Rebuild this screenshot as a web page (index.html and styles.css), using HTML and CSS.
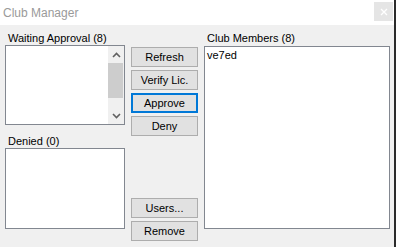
FILE: index.html
```html
<!DOCTYPE html>
<html>
<head>
<meta charset="utf-8">
<link rel="stylesheet" href="styles.css">
</head>
<body>
<div class="window">
  <div class="titlebar">
    <span class="title">Club Manager</span>
    <span class="close"><svg width="8" height="8" viewBox="0 0 8 8"><path d="M1 1L7 7M7 1L1 7" stroke="#ffffff" stroke-width="1.3"/></svg></span>
  </div>
  <div class="client">
    <div class="col left">
      <div class="label">Waiting Approval (8)</div>
      <div class="listbox waiting">
        <div class="items"></div>
        <div class="scrollbar">
          <div class="arrow"><svg width="9" height="6" viewBox="0 0 9 6"><path d="M1 5L4.5 1.5L8 5" fill="none" stroke="#606060" stroke-width="1.6"/></svg></div>
          <div class="track"><div class="thumb"></div></div>
          <div class="arrow"><svg width="9" height="6" viewBox="0 0 9 6"><path d="M1 1L4.5 4.5L8 1" fill="none" stroke="#606060" stroke-width="1.6"/></svg></div>
        </div>
      </div>
      <div class="label denied-label">Denied (0)</div>
      <div class="listbox denied"></div>
    </div>
    <div class="col middle">
      <div class="btn-group">
        <button class="btn">Refresh</button>
        <button class="btn">Verify Lic.</button>
        <button class="btn focused">Approve</button>
        <button class="btn">Deny</button>
      </div>
      <div class="btn-group bottom">
        <button class="btn">Users...</button>
        <button class="btn">Remove</button>
      </div>
    </div>
    <div class="col right">
      <div class="label">Club Members (8)</div>
      <div class="listbox members">
        <div class="item">ve7ed</div>
      </div>
    </div>
  </div>
</div>
</body>
</html>
```
FILE: styles.css
```css
html, body {
  margin: 0;
  padding: 0;
  background: #f0f0f0;
}
body {
  font-family: "Liberation Sans", Arial, sans-serif;
  font-size: 12px;
  color: #000;
}
.window {
  width: 396px;
  height: 247px;
  box-sizing: border-box;
  border-right: 2px solid #2b2b2b;
  background: #f0f0f0;
  display: flex;
  flex-direction: column;
}
.titlebar {
  height: 25px;
  background: #ffffff;
  display: flex;
  align-items: center;
  justify-content: space-between;
  padding-left: 3px;
  padding-right: 1px;
}
.title {
  color: #9a9a9a;
  font-size: 12px;
  margin-top: 1px;
}
.close {
  width: 19px;
  height: 19px;
  background: #e5e5e5;
  display: flex;
  align-items: center;
  justify-content: center;
  margin-bottom: 2px;
}
.client {
  flex: 1;
  display: grid;
  grid-template-columns: 120px 67px 186px;
  column-gap: 6px;
  padding: 7px 0 0 5px;
  align-items: start;
}
.col {
  display: flex;
  flex-direction: column;
}
.label {
  font-size: 11px;
  height: 13px;
  line-height: 13px;
  padding-left: 3px;
  white-space: nowrap;
}
.listbox {
  background: #ffffff;
  border: 1px solid #828790;
  box-sizing: border-box;
}
.waiting {
  height: 80px;
  display: flex;
}
.waiting .items {
  flex: 1;
}
.scrollbar {
  width: 16px;
  background: #f0f0f0;
  display: flex;
  flex-direction: column;
}
.arrow {
  height: 17px;
  display: flex;
  align-items: center;
  justify-content: center;
}
.track {
  flex: 1;
}
.thumb {
  height: 35px;
  margin: 0 1px 0 0;
  background: #cdcdcd;
}
.denied-label {
  margin-top: 10px;
  height: 13px;
}
.denied {
  height: 81px;
}
.middle {
  justify-content: space-between;
  padding-top: 15px;
  height: 209px;
  box-sizing: border-box;
}
.btn-group {
  display: flex;
  flex-direction: column;
  gap: 3px;
}
.btn {
  height: 20px;
  width: 67px;
  margin: 0;
  padding: 0;
  background: #e1e1e1;
  border: 1px solid #adadad;
  font-family: "Liberation Sans", Arial, sans-serif;
  font-size: 11px;
  color: #000;
  box-sizing: border-box;
}
.btn.focused {
  border: 2px solid #0078d7;
}
.members {
  margin-top: 1px;
  height: 183px;
  padding: 2px 0 0 2px;
}
.item {
  font-size: 11px;
  line-height: 13px;
}
```
